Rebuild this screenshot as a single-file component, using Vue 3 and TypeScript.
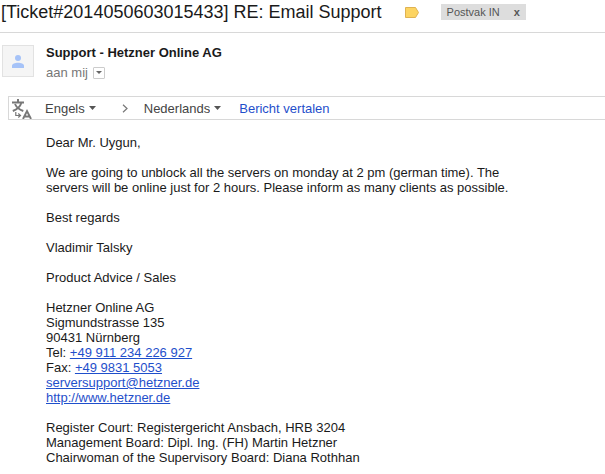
<script setup lang="ts">
import { ref } from 'vue'

interface Segment {
  text: string
  href?: string
}

const languages: string[] = ['Engels', 'Nederlands', 'Duits']
const source = ref('Engels')
const target = ref('Nederlands')
const inInbox = ref(true)

const paragraphs: Segment[][][] = [
  [[{ text: 'Dear Mr. Uygun,' }]],
  [
    [{ text: 'We are going to unblock all the servers on monday at 2 pm (german time). The' }],
    [{ text: 'servers will be online just for 2 hours. Please inform as many clients as possible.' }],
  ],
  [[{ text: 'Best regards' }]],
  [[{ text: 'Vladimir Talsky' }]],
  [[{ text: 'Product Advice / Sales' }]],
  [
    [{ text: 'Hetzner Online AG' }],
    [{ text: 'Sigmundstrasse 135' }],
    [{ text: '90431 Nürnberg' }],
    [{ text: 'Tel: ' }, { text: '+49 911 234 226 927', href: 'tel:+49911234226927' }],
    [{ text: 'Fax: ' }, { text: '+49 9831 5053', href: 'tel:+4998315053' }],
    [{ text: 'serversupport@hetzner.de', href: 'mailto:serversupport@hetzner.de' }],
    [{ text: 'http://www.hetzner.de', href: 'http://www.hetzner.de' }],
  ],
  [
    [{ text: 'Register Court: Registergericht Ansbach, HRB 3204' }],
    [{ text: 'Management Board: Dipl. Ing. (FH) Martin Hetzner' }],
    [{ text: 'Chairwoman of the Supervisory Board: Diana Rothhan' }],
  ],
]
</script>

<template>
  <main class="mail">
    <header class="subject">
      <h1>[Ticket#2014050603015433] RE: Email Support</h1>
      <svg class="tag" viewBox="0 0 14 11" aria-hidden="true">
        <path d="M.5 .5H10.500L13.500 5.500L10.500 10.500H.5Z" fill="#fcd462" stroke="#dfb252" />
      </svg>
      <span v-if="inInbox" class="chip">
        Postvak IN
        <button type="button" @click="inInbox = false">x</button>
      </span>
    </header>

    <section class="sender">
      <div class="avatar">
        <svg viewBox="0 0 12 13" aria-hidden="true">
          <circle cx="6" cy="3" r="3" fill="#a6c3f8" />
          <path d="M0 13V10.800C0 8.800 3 7.800 6 7.800S12 8.800 12 10.800V13Z" fill="#a6c3f8" />
        </svg>
      </div>
      <div class="names">
        <h2>Support - Hetzner Online AG</h2>
        <div class="recipient">
          <span>aan mij</span>
          <button type="button" aria-label="Details">
            <svg viewBox="0 0 6 3" aria-hidden="true"><path d="M0 0H6L3 3Z" fill="#666" /></svg>
          </button>
        </div>
      </div>
    </section>

    <section class="translate">
      <svg class="glyph" viewBox="0 0 20 22" aria-hidden="true" fill="none" stroke="#777">
        <path d="M6 2V5M0 5.500H12" stroke-width="2" />
        <path d="M9.300 6C8.300 9.500 5 12.300 .8 14M3 7C4.500 10.500 7 12.500 11.300 14" stroke-width="1.900" />
        <path d="M3.800 15V18.500H8M6.300 16.500L8.500 18.500L6.300 20.500" stroke-width="1.200" />
        <path d="M11 22L15 14L19 22M12.500 19.500H17.500" stroke-width="1.900" />
      </svg>
      <label class="picker source">
        <select v-model="source" aria-label="Brontaal">
          <option v-for="l in languages" :key="l">{{ l }}</option>
        </select>
        <svg viewBox="0 0 7 4" aria-hidden="true"><path d="M0 0H7L3.500 4Z" fill="#555" /></svg>
      </label>
      <svg class="chevron" viewBox="0 0 6 9" aria-hidden="true">
        <path d="M1 .8L5 4.500L1 8.200" fill="none" stroke="#777" stroke-width="1.200" />
      </svg>
      <label class="picker">
        <select v-model="target" aria-label="Doeltaal">
          <option v-for="l in languages" :key="l">{{ l }}</option>
        </select>
        <svg viewBox="0 0 7 4" aria-hidden="true"><path d="M0 0H7L3.500 4Z" fill="#555" /></svg>
      </label>
      <a class="action" href="#vertalen">Bericht vertalen</a>
    </section>

    <article class="body">
      <p v-for="(lines, p) in paragraphs" :key="p">
        <span v-for="(line, n) in lines" :key="n" class="line">
          <template v-for="(s, k) in line" :key="k"><a v-if="s.href" :href="s.href">{{ s.text }}</a><template v-else>{{ s.text }}</template></template>
        </span>
      </p>
    </article>
  </main>
</template>

<style>
body {
  background: #fff;
}
</style>

<style scoped>
.mail {
  font: 13px/15px 'Liberation Sans', Arial, sans-serif;
  color: #1a1a1a;
}

h1,
h2,
p {
  margin: 0;
}

button,
select {
  font: inherit;
  color: inherit;
  border: 0;
  padding: 0;
  margin: 0;
  background: none;
  appearance: none;
  cursor: pointer;
}

svg {
  display: block;
  flex: none;
}

.subject {
  display: flex;
  align-items: center;
  height: 24px;
  padding: 0 0 8px 1px;
  border-bottom: 1px solid #d8d8d8;
  white-space: nowrap;
}

h1 {
  font-size: 18px;
  line-height: 24px;
  font-weight: 400;
}

.tag {
  width: 14px;
  height: 11px;
  margin-left: 23px;
}

.chip {
  display: flex;
  align-items: center;
  gap: 14px;
  height: 16px;
  margin-left: 22px;
  padding: 0 6px;
  background: #ddd;
  color: #555;
  font-size: 11px;
}

.chip button {
  font-weight: 700;
}

.sender {
  display: flex;
  gap: 12px;
  padding: 12px 2px 0;
}

.avatar {
  display: grid;
  place-items: center;
  box-sizing: border-box;
  width: 32px;
  height: 32px;
  border: 1px solid #e2e2e2;
  background: #f5f5f5;
}

.avatar svg {
  width: 12px;
  height: 13px;
}

h2 {
  font-size: 13px;
  line-height: 15px;
}

.recipient {
  display: flex;
  align-items: center;
  gap: 5px;
  margin-top: 5px;
  color: #777;
}

.recipient button {
  display: grid;
  place-items: center;
  box-sizing: border-box;
  width: 12px;
  height: 12px;
  border: 1px solid #ccc;
  border-radius: 1px;
}

.recipient button svg {
  width: 6px;
  height: 3px;
}

.translate {
  display: flex;
  align-items: center;
  height: 22px;
  margin: 16px 0 0 8px;
  padding-left: 3px;
  border: 1px solid #d8d8d8;
  border-right: 0;
  color: #444;
  white-space: nowrap;
}

.glyph {
  width: 20px;
  height: 22px;
}

.picker {
  display: flex;
  align-items: center;
  gap: 4px;
}

.picker.source {
  margin-left: 13px;
}

.picker select {
  field-sizing: content;
}

.picker svg {
  width: 7px;
  height: 4px;
}

.chevron {
  width: 6px;
  height: 9px;
  margin: 0 16px 0 26px;
}

.action {
  margin-left: 18px;
  color: #1f4fcb;
  text-decoration: none;
}

.body {
  display: grid;
  gap: 15px;
  padding: 15px 8px 8px 46px;
}

.line {
  display: block;
}

.body a {
  color: #1f4fcb;
}
</style>
